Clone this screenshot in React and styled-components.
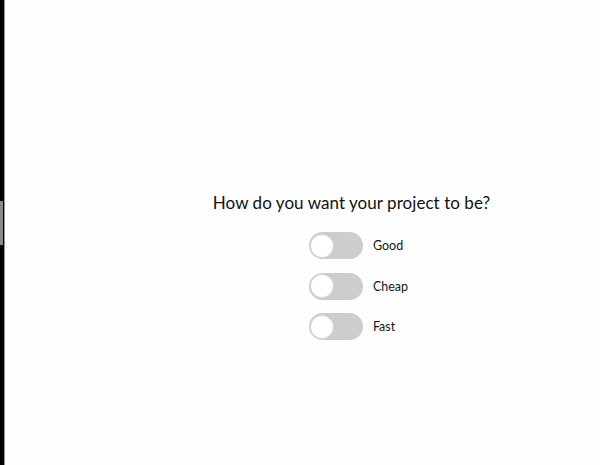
import styled, { createGlobalStyle } from 'styled-components';

const GlobalStyle = createGlobalStyle`
  html, body {
    margin: 0;
    padding: 0;
    background: #fefefe;
  }
  body {
    font-family: Lato, "Noto Sans", sans-serif;
    color: #111;
  }
`;

const options = ['Good', 'Cheap', 'Fast'];

const App = () => {
  return (
    <>
      <GlobalStyle />
      <Page>
        <SideBar>
          <Thumb />
        </SideBar>
        <Main>
          <Title>How do you want your project to be?</Title>
          <List>
            {options.map((label) => (
              <Row key={label}>
                <Switch>
                  <Knob />
                </Switch>
                <Label>{label}</Label>
              </Row>
            ))}
          </List>
        </Main>
      </Page>
    </>
  );
};

export default App;

const Page = styled.div`
  display: flex;
  width: 600px;
  height: 465px;
  overflow: hidden;
`;

const SideBar = styled.div`
  width: 5px;
  flex-shrink: 0;
  background: #000;
  border-right: 1px solid #9a9a9a;
  padding-top: 201px;
  box-sizing: border-box;
`;

const Thumb = styled.div`
  width: 3px;
  height: 44px;
  background: #8a8a8a;
`;

const Main = styled.main`
  flex: 1;
  display: flex;
  flex-direction: column;
  align-items: center;
  padding-top: 192px;
  padding-left: 98px;
`;

const Title = styled.h1`
  margin: 0;
  font-size: 17px;
  font-weight: 400;
  color: #111;
  letter-spacing: 0.05px;
`;

const List = styled.ul`
  list-style: none;
  margin: 19px 0 0 0;
  padding: 0 0 0 14px;
  display: flex;
  flex-direction: column;
  gap: 13.5px;
`;

const Row = styled.li`
  display: flex;
  align-items: center;
  gap: 10px;
`;

const Switch = styled.div`
  width: 54px;
  height: 27px;
  border-radius: 14px;
  background: #cdcdcd;
  display: flex;
  align-items: center;
  padding: 0 1.5px;
  box-sizing: border-box;
`;

const Knob = styled.div`
  width: 24px;
  height: 24px;
  border-radius: 50%;
  background: #fff;
  border: 1px solid #d6d6d6;
  box-sizing: border-box;
`;

const Label = styled.span`
  font-size: 12.5px;
  color: #151515;
`;
